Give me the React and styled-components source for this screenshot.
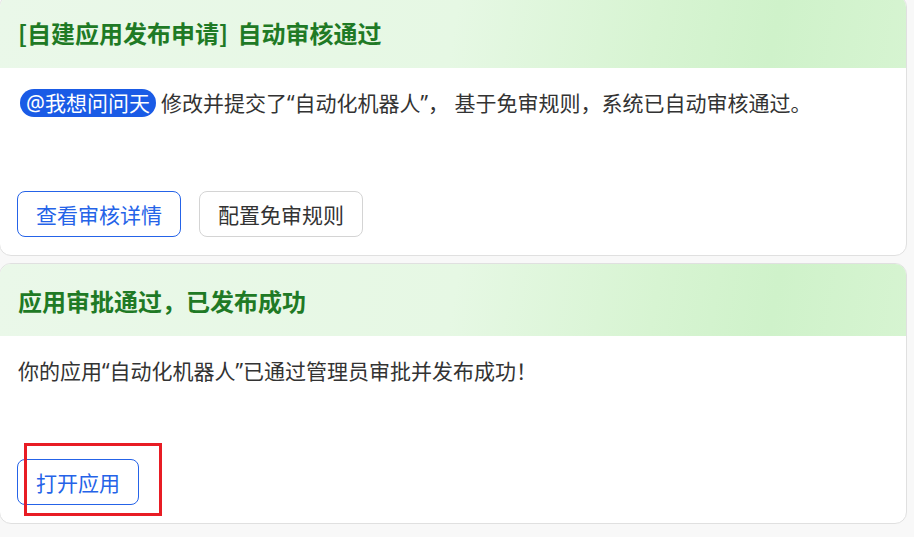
import styled, { createGlobalStyle } from 'styled-components'

const GlobalStyle = createGlobalStyle`
  html, body { margin: 0; padding: 0; background: #f8f8f8; }
  body { font-family: "Noto Sans", "Noto Sans CJK SC", sans-serif; overflow: hidden; }
`

const List = styled.div`
  display: flex;
  flex-direction: column;
  gap: 7px;
  margin: -5px 7px 0 -1px;
`

const Card = styled.section`
  background: #fff;
  border: 1px solid #e0e0e0;
  border-radius: 12px;
  overflow: hidden;
`

const Header = styled.header`
  height: 72px;
  display: flex;
  align-items: center;
  padding: 0 18px;
  background: linear-gradient(100deg, #eaf8e9 0%, #e6f8e4 50%, #d7f4d2 72%, #cff2ca 85%, #d6f4d1 100%);
`

const Title = styled.h2`
  margin: 0;
  font-family: "Noto Sans CJK SC", sans-serif;
  font-size: 24px;
  font-weight: 700;
  word-spacing: 4px;
  color: #1f7a25;
`

const Body = styled.div`
  padding: 20px 17px 18px;
`

const Message = styled.p`
  margin: 0 0 0 1px;
  font-size: 21px;
  line-height: 30px;
  color: #333;
  min-height: 103px;
`

const Mention = styled.span`
  display: inline-block;
  height: 28px;
  line-height: 28px;
  padding: 0 6px;
  margin: 0 5px 0 2px;
  border-radius: 14px;
  background: #1a5be6;
  color: #fff;
`

const Actions = styled.div`
  position: relative;
  display: flex;
  gap: 18px;
`

const Button = styled.button`
  height: 46px;
  padding: 0 18px;
  border-radius: 8px;
  background: #fff;
  font-family: inherit;
  font-size: 21px;
  border: 1px solid ${p => (p.$primary ? '#2563e8' : '#d4d4d4')};
  color: ${p => (p.$primary ? '#2563e8' : '#333')};
  cursor: pointer;
`

const Highlight = styled.div`
  position: absolute;
  left: 7px;
  top: -16px;
  width: 138px;
  height: 73px;
  box-sizing: border-box;
  border: 3px solid #e81c24;
  pointer-events: none;
`

export default function App() {
  return (
    <>
      <GlobalStyle />
      <List>
        <Card>
          <Header>
            <Title>[自建应用发布申请] 自动审核通过</Title>
          </Header>
          <Body>
            <Message>
              <Mention>@我想问问天</Mention>修改并提交了“自动化机器人”， 基于免审规则，系统已自动审核通过。
            </Message>
            <Actions>
              <Button $primary>查看审核详情</Button>
              <Button>配置免审规则</Button>
            </Actions>
          </Body>
        </Card>
        <Card>
          <Header>
            <Title>应用审批通过，已发布成功</Title>
          </Header>
          <Body>
            <Message>你的应用“自动化机器人”已通过管理员审批并发布成功！</Message>
            <Actions>
              <Button $primary>打开应用</Button>
              <Highlight />
            </Actions>
          </Body>
        </Card>
      </List>
    </>
  )
}
